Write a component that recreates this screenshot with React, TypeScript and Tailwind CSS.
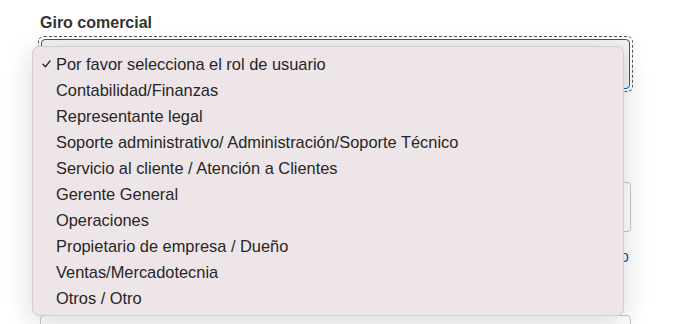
import React from "react";

const options = [
  "Por favor selecciona el rol de usuario",
  "Contabilidad/Finanzas",
  "Representante legal",
  "Soporte administrativo/ Administración/Soporte Técnico",
  "Servicio al cliente / Atención a Clientes",
  "Gerente General",
  "Operaciones",
  "Propietario de empresa / Dueño",
  "Ventas/Mercadotecnia",
  "Otros / Otro",
];

export default function App() {
  return (
    <div
      className="relative w-[677px] h-[324px] overflow-hidden bg-white text-[#222]"
      style={{ fontFamily: '"Liberation Sans", Arial, sans-serif' }}
    >
      <div className="pl-[40px] pr-[46px] pt-[13px]">
        <div className="text-[16px] font-bold text-[#333] leading-[20px]">Giro comercial</div>

        {/* focused select */}
        <div className="mt-[3px] -mx-[2px] rounded-[6px] border border-dashed border-[#555] p-[2px]">
          <div className="h-[50px] rounded-[4px] border-[1.5px] border-[#1f5f9c] bg-[#f3f3f4]" />
        </div>

        {/* fields behind the menu */}
        <div className="mt-[90px] h-[50px] rounded-[4px] border border-[#c8c8cc] bg-white" />
        <div className="mt-[15px] flex justify-end text-[16px] leading-[20px] text-[#1f5fb0] pr-[2px]">Ver más o</div>
        <div className="mt-[48px] h-[50px] rounded-[4px] border border-[#c8c8cc] bg-white" />
      </div>

      {/* open option menu */}
      <div className="absolute left-[32px] top-[46px] w-[592px] rounded-[7px] border border-[#d3cfd1] bg-[#eee5e8] pt-[4px] pb-[4px] shadow-[0_6px_28px_rgba(0,0,0,0.16)]">
        {options.map((o, i) => (
          <div key={o} className="flex h-[26px] items-center text-[16.4px] text-[#262626]">
            <span className="flex w-[23px] justify-end pr-[5px]">
              {i === 0 && (
                <svg width="9" height="8" viewBox="0 0 9 8" fill="none">
                  <path d="M1 4.2 L3.4 6.8 L8 1" stroke="#222" strokeWidth="1.3" strokeLinecap="round" strokeLinejoin="round" />
                </svg>
              )}
            </span>
            <span>{o}</span>
          </div>
        ))}
      </div>
    </div>
  );
}
